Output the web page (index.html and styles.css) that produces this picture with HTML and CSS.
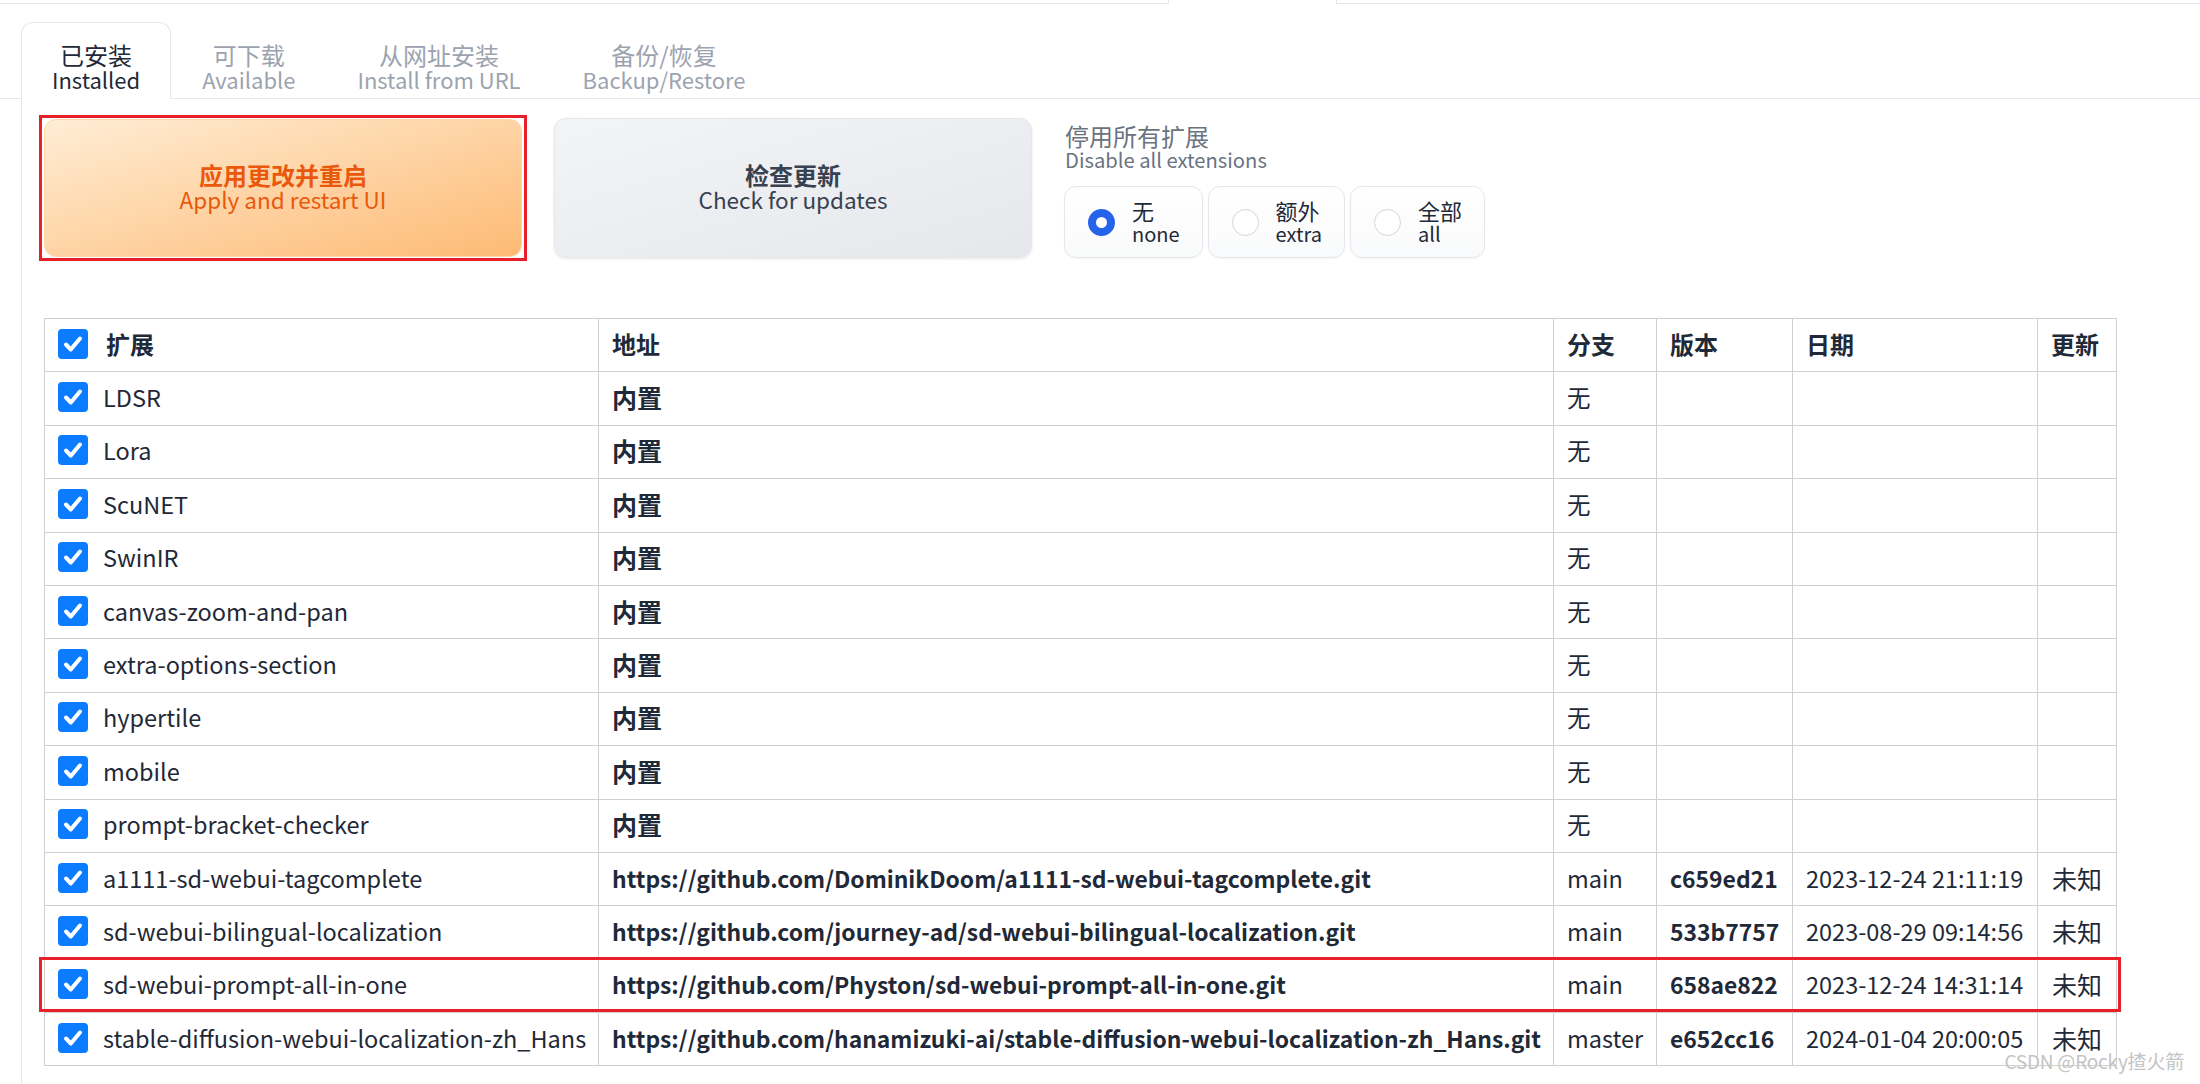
FILE: index.html
```html
<!DOCTYPE html>
<html lang="zh">
<head>
<meta charset="utf-8">
<title>Extensions</title>
<link rel="stylesheet" href="styles.css">
</head>
<body>
<div class="topnav">
  <div class="tn-line tn-left"></div>
  <div class="tn-sel"></div>
  <div class="tn-line tn-right"></div>
</div>

<div class="tabs">
  <div class="tab sel"><span class="zh">已安装</span><span class="en">Installed</span></div>
  <div class="tab"><span class="zh">可下载</span><span class="en">Available</span></div>
  <div class="tab"><span class="zh">从网址安装</span><span class="en">Install from URL</span></div>
  <div class="tab"><span class="zh">备份/恢复</span><span class="en">Backup/Restore</span></div>
</div>

<div class="panel">
  <div class="controls">
    <div class="marked">
      <button class="btn primary"><span class="b-zh">应用更改并重启</span><span class="b-en">Apply and restart UI</span></button>
    </div>
    <button class="btn secondary"><span class="b-zh">检查更新</span><span class="b-en">Check for updates</span></button>
    <div class="radio-block">
      <div class="rb-label"><span class="rb-zh">停用所有扩展</span><span class="rb-en">Disable all extensions</span></div>
      <div class="radios">
        <div class="radio checked"><span class="dot"></span><span class="r-text"><span class="r-zh">无</span><span class="r-en">none</span></span></div>
        <div class="radio"><span class="dot"></span><span class="r-text"><span class="r-zh">额外</span><span class="r-en">extra</span></span></div>
        <div class="radio"><span class="dot"></span><span class="r-text"><span class="r-zh">全部</span><span class="r-en">all</span></span></div>
      </div>
    </div>
  </div>

  <div class="table-wrap">
    <table class="ext">
      <colgroup>
        <col class="c-name"><col class="c-url"><col class="c-branch"><col class="c-ver"><col class="c-date"><col class="c-upd">
      </colgroup>
      <thead>
        <tr>
          <th><span class="cell-name"><span class="cb"><svg viewBox="0 0 30 30"><path d="M8 15.5l4.8 5L22 9.5"/></svg></span><span class="th-ext">扩展</span></span></th>
          <th>地址</th><th>分支</th><th>版本</th><th>日期</th><th>更新</th>
        </tr>
      </thead>
      <tbody>
        <tr><td><span class="cell-name"><span class="cb"><svg viewBox="0 0 30 30"><path d="M8 15.5l4.8 5L22 9.5"/></svg></span>LDSR</span></td><td class="zb">内置</td><td>无</td><td></td><td></td><td></td></tr>
        <tr><td><span class="cell-name"><span class="cb"><svg viewBox="0 0 30 30"><path d="M8 15.5l4.8 5L22 9.5"/></svg></span>Lora</span></td><td class="zb">内置</td><td>无</td><td></td><td></td><td></td></tr>
        <tr><td><span class="cell-name"><span class="cb"><svg viewBox="0 0 30 30"><path d="M8 15.5l4.8 5L22 9.5"/></svg></span>ScuNET</span></td><td class="zb">内置</td><td>无</td><td></td><td></td><td></td></tr>
        <tr><td><span class="cell-name"><span class="cb"><svg viewBox="0 0 30 30"><path d="M8 15.5l4.8 5L22 9.5"/></svg></span>SwinIR</span></td><td class="zb">内置</td><td>无</td><td></td><td></td><td></td></tr>
        <tr><td><span class="cell-name"><span class="cb"><svg viewBox="0 0 30 30"><path d="M8 15.5l4.8 5L22 9.5"/></svg></span>canvas-zoom-and-pan</span></td><td class="zb">内置</td><td>无</td><td></td><td></td><td></td></tr>
        <tr><td><span class="cell-name"><span class="cb"><svg viewBox="0 0 30 30"><path d="M8 15.5l4.8 5L22 9.5"/></svg></span>extra-options-section</span></td><td class="zb">内置</td><td>无</td><td></td><td></td><td></td></tr>
        <tr><td><span class="cell-name"><span class="cb"><svg viewBox="0 0 30 30"><path d="M8 15.5l4.8 5L22 9.5"/></svg></span>hypertile</span></td><td class="zb">内置</td><td>无</td><td></td><td></td><td></td></tr>
        <tr><td><span class="cell-name"><span class="cb"><svg viewBox="0 0 30 30"><path d="M8 15.5l4.8 5L22 9.5"/></svg></span>mobile</span></td><td class="zb">内置</td><td>无</td><td></td><td></td><td></td></tr>
        <tr><td><span class="cell-name"><span class="cb"><svg viewBox="0 0 30 30"><path d="M8 15.5l4.8 5L22 9.5"/></svg></span>prompt-bracket-checker</span></td><td class="zb">内置</td><td>无</td><td></td><td></td><td></td></tr>
        <tr><td><span class="cell-name"><span class="cb"><svg viewBox="0 0 30 30"><path d="M8 15.5l4.8 5L22 9.5"/></svg></span>a1111-sd-webui-tagcomplete</span></td><td class="b">https://github.com/DominikDoom/a1111-sd-webui-tagcomplete.git</td><td>main</td><td class="b">c659ed21</td><td>2023-12-24 21:11:19</td><td class="upd">未知</td></tr>
        <tr><td><span class="cell-name"><span class="cb"><svg viewBox="0 0 30 30"><path d="M8 15.5l4.8 5L22 9.5"/></svg></span>sd-webui-bilingual-localization</span></td><td class="b">https://github.com/journey-ad/sd-webui-bilingual-localization.git</td><td>main</td><td class="b">533b7757</td><td>2023-08-29 09:14:56</td><td class="upd">未知</td></tr>
        <tr><td><span class="cell-name"><span class="cb"><svg viewBox="0 0 30 30"><path d="M8 15.5l4.8 5L22 9.5"/></svg></span>sd-webui-prompt-all-in-one</span></td><td class="b">https://github.com/Physton/sd-webui-prompt-all-in-one.git</td><td>main</td><td class="b">658ae822</td><td>2023-12-24 14:31:14</td><td class="upd">未知</td></tr>
        <tr><td><span class="cell-name"><span class="cb"><svg viewBox="0 0 30 30"><path d="M8 15.5l4.8 5L22 9.5"/></svg></span>stable-diffusion-webui-localization-zh_Hans</span></td><td class="b">https://github.com/hanamizuki-ai/stable-diffusion-webui-localization-zh_Hans.git</td><td>master</td><td class="b">e652cc16</td><td>2024-01-04 20:00:05</td><td class="upd">未知</td></tr>
      </tbody>
    </table>
    <div class="row-highlight"></div>
  </div>
</div>

<div class="watermark">CSDN @Rocky揸火箭</div>
</body>
</html>
```

FILE: styles.css
```css
* { box-sizing: border-box; }

html, body {
  margin: 0;
  padding: 0;
  background: #ffffff;
}

body {
  width: 2200px;
  height: 1084px;
  overflow: hidden;
  position: relative;
  font-family: "Noto Sans CJK SC", "Noto Sans", sans-serif;
  color: #1f2937;
}

/* outer nav remnant */
.topnav {
  display: flex;
  height: 4px;
}
.tn-line {
  border-bottom: 1px solid #e5e7eb;
}
.tn-left { width: 1168px; }
.tn-sel {
  width: 169px;
  border-left: 1px solid #e5e7eb;
  border-right: 1px solid #e5e7eb;
}
.tn-right { flex: 1; }

/* tabs */
.tabs {
  display: flex;
  margin-top: 18px;
  padding-left: 21px;
  border-bottom: 1px solid #e5e7eb;
  height: 77px;
}
.tab {
  display: flex;
  flex-direction: column;
  align-items: center;
  padding: 20px 31px 0;
  height: 77px;
  color: #9ca3af;
  line-height: 25px;
  white-space: nowrap;
}
.tab .zh { font-size: 24px; }
.tab .en { font-size: 22px; }
.tab.sel {
  color: #1f2937;
  background: #ffffff;
  border: 1px solid #e5e7eb;
  border-bottom: none;
  border-radius: 12px 12px 0 0;
  padding: 19px 30px 0;
  margin-bottom: -1px;
  height: 77px;
}

/* panel */
.panel {
  margin-left: 21px;
  border-left: 1px solid #e5e7eb;
  padding: 20px 0 0 22px;
  height: 986px;
}

.controls {
  display: flex;
  align-items: flex-start;
  gap: 32px;
}

.marked {
  position: relative;
}
.marked::after {
  content: "";
  position: absolute;
  left: -5px;
  right: -5px;
  top: -4px;
  bottom: -4px;
  border: 3px solid #e8202a;
  pointer-events: none;
}

.btn {
  width: 478px;
  height: 138px;
  border-radius: 12px;
  display: flex;
  flex-direction: column;
  align-items: center;
  justify-content: center;
  font-family: "Noto Sans CJK SC", "Noto Sans", sans-serif;
  line-height: 25px;
  padding: 0 0 2px;
  cursor: pointer;
}
.b-zh { font-weight: 700; font-size: 24px; }
.b-en { font-weight: 400; font-size: 22.5px; }

.btn.primary {
  background: linear-gradient(to bottom right, #ffedd5, #fdba74);
  border: 1px solid #fed7aa;
  color: #ea580c;
}
.btn.secondary {
  background: linear-gradient(to bottom right, #f3f4f6, #e5e7eb);
  border: 1px solid #e5e7eb;
  color: #374151;
  box-shadow: 0 1px 3px rgba(0,0,0,0.10);
  height: 140px;
  margin-top: -1px;
}

.radio-block {
  display: flex;
  flex-direction: column;
  padding-top: 5px;
}
.rb-label {
  display: flex;
  flex-direction: column;
  line-height: 24px;
  color: #6b7280;
  margin-left: 1px;
}
.rb-zh { font-size: 24px; }
.rb-en { font-size: 20.2px; }
.radios {
  display: flex;
  gap: 5px;
  margin-top: 14px;
}
.radio {
  display: flex;
  align-items: center;
  height: 72px;
  padding: 0 22px 0 23px;
  border: 1px solid #e5e7eb;
  border-radius: 12px;
  background: linear-gradient(to bottom, #ffffff, #f9fafb);
  box-shadow: 0 1px 2px rgba(0,0,0,0.04);
}
.dot {
  width: 27px;
  height: 27px;
  border-radius: 50%;
  border: 1px solid #d1d5db;
  background: #ffffff;
  flex: none;
}
.radio.checked .dot {
  background: #ffffff;
  border: 8.5px solid #2563eb;
}
.r-text {
  display: flex;
  flex-direction: column;
  margin-left: 17px;
  line-height: 23px;
  color: #1f2937;
}
.r-zh { font-size: 22px; }
.r-en { font-size: 20px; }

/* table */
.table-wrap {
  position: relative;
  margin-top: 60px;
  width: 2072px;
}
.ext {
  width: 2072px;
  border-collapse: collapse;
  table-layout: fixed;
  font-size: 23.5px;
  line-height: 30px;
}
.c-name { width: 554px; }
.c-url { width: 955px; }
.c-branch { width: 103px; }
.c-ver { width: 136px; }
.c-date { width: 245px; }
.c-upd { width: 79px; }

.ext tr { height: 53.4px; }
.ext th, .ext td {
  border: 1px solid #d0d0d0;
  padding: 0 0 3px 13px;
  text-align: left;
  vertical-align: middle;
  white-space: nowrap;
  overflow: hidden;
}
.ext th { font-weight: 700; color: #1f2937; font-size: 24px; }
.ext td { font-weight: 400; color: #1f2937; }
.ext td.b { font-weight: 700; font-size: 22.9px; }
.ext td.zb { font-weight: 700; font-size: 25px; }
.ext td.upd { padding-left: 14px; font-size: 25px; }

.cell-name {
  display: flex;
  align-items: center;
}
.cb {
  width: 30px;
  height: 30px;
  border-radius: 4px;
  background: #0b7bff;
  margin-right: 15px;
  flex: none;
  display: block;
}
.cb svg { display: block; width: 30px; height: 30px; }
.cb path {
  fill: none;
  stroke: #ffffff;
  stroke-width: 4;
  stroke-linecap: round;
  stroke-linejoin: round;
}
.th-ext { margin-left: 3px; }

.row-highlight {
  position: absolute;
  left: -5px;
  right: -5px;
  top: 639px;
  height: 55px;
  border: 3px solid #e8202a;
  pointer-events: none;
}

.watermark {
  position: absolute;
  right: 16px;
  bottom: 10px;
  font-size: 19px;
  color: #c4c4c4;
  letter-spacing: -0.2px;
}
```
